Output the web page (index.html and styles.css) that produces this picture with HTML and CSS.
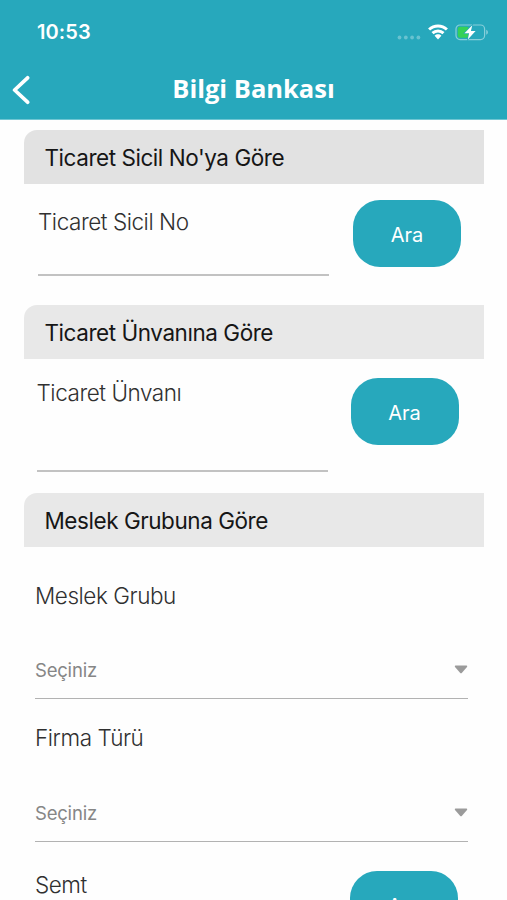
FILE: index.html
```html
<!DOCTYPE html>
<html lang="tr">
<head>
<meta charset="utf-8">
<meta name="viewport" content="width=device-width, initial-scale=1">
<title>Bilgi Bankası</title>
<link rel="stylesheet" href="styles.css">
</head>
<body>
<header class="top">
  <div class="status">
    <span class="time">10:53</span>
    <svg class="signal" width="24" height="5" viewBox="0 0 24 5"><g fill="#fff" fill-opacity=".3"><circle cx="2.5" cy="2.5" r="1.9"/><circle cx="8.8" cy="2.5" r="1.9"/><circle cx="15.1" cy="2.5" r="1.9"/><circle cx="21.4" cy="2.5" r="1.9"/></g></svg>
    <svg class="wifi" width="20" height="16" viewBox="0 0 20 16"><g fill="none" stroke="#fff" stroke-width="3"><path d="M1.1 5.5C6.1.7 13.9.7 18.9 5.5"/><path d="M4.5 9.2c3.1-2.9 7.900-2.900 11 0"/></g><path d="M6.6 11.7c1.900-1.800 4.900-1.800 6.800 0L10 15.4z" fill="#fff"/></svg>
    <svg class="battery" width="34" height="17" viewBox="0 0 34 17"><rect x="1" y="1" width="28.6" height="14.6" rx="4" fill="none" stroke="#fff" stroke-opacity=".45" stroke-width="1.2"/><path d="M31.3 5.8c2 .8 2 4.2 0 5z" fill="#fff" fill-opacity=".5"/><rect x="2.8" y="2.8" width="11" height="11" rx="2.2" fill="#35d158"/><path d="M17.3 1.2 9.5 9.2h4.600l-1.300 6.200 7.800-8.300h-4.700z" fill="#fff" stroke="#27a8bc" stroke-width="1.2" paint-order="stroke"/></svg>
  </div>
  <div class="nav">
    <svg class="back" width="20" height="30" viewBox="0 0 20 30"><path d="M17.6 2.800 4.600 15l13 12.200" fill="none" stroke="#fff" stroke-width="3.7" stroke-linecap="round" stroke-linejoin="round"/></svg>
    <h1 class="title">Bilgi Bankası</h1>
  </div>
</header>
<main class="content">
  <section class="group registry">
    <h2 class="heading dark">Ticaret Sicil No'ya Göre</h2>
    <div class="row">
      <label class="field"><span class="label">Ticaret Sicil No</span></label>
      <button class="search">Ara</button>
    </div>
  </section>
  <section class="group company">
    <h2 class="heading">Ticaret Ünvanına Göre</h2>
    <div class="row">
      <label class="field"><span class="label">Ticaret Ünvanı</span></label>
      <button class="search">Ara</button>
    </div>
  </section>
  <section class="group trade">
    <h2 class="heading">Meslek Grubuna Göre</h2>
    <div class="picker">
      <span class="label">Meslek Grubu</span>
      <div class="select"><span>Seçiniz</span><svg width="14" height="9" viewBox="0 0 14 9"><path d="M1.5.5h11q1.3.4.5 1.4L8 7.7q-1 1-2 0L1 1.9Q.2.9 1.5.5z" fill="#9b9b9b"/></svg></div>
    </div>
    <div class="picker second">
      <span class="label">Firma Türü</span>
      <div class="select"><span>Seçiniz</span><svg width="14" height="9" viewBox="0 0 14 9"><path d="M1.5.5h11q1.3.4.5 1.4L8 7.7q-1 1-2 0L1 1.9Q.2.9 1.5.5z" fill="#9b9b9b"/></svg></div>
    </div>
    <div class="row last">
      <span class="label">Semt</span>
      <button class="search">Ara</button>
    </div>
  </section>
</main>
</body>
</html>
```
FILE: styles.css
```css
* { box-sizing: border-box; }
html, body { height: 100%; }
body {
  margin: 0;
  height: 900px;
  overflow: hidden;
  background: #fefefe;
  color: #303030;
  font-family: Inter, "Liberation Sans", sans-serif;
}
svg { display: block; flex: none; }
.top { height: 120px; background: #27a8bc; color: #fff; border-bottom: 1px solid #6fc6d3; }
.status { display: flex; align-items: center; height: 64px; padding: 0 18px 0 37px; }
.time { flex: 1; font-size: 20px; font-weight: 600; letter-spacing: .1px; }
.signal { margin: 10px 7px 0 0; }
.wifi { margin-right: 7px; }
.nav { display: grid; grid-template-columns: 34px 1fr 34px; align-items: center; height: 52px; }
.back { margin-left: 10px; }
.title { margin: -4px 0 0; text-align: center; font: 700 25.5px/34px "Open Sans", sans-serif; }
.content { padding: 10px 23px 0 24px; }
.registry { height: 175px; }
.company { height: 188px; }
.heading {
  margin: 0;
  height: 54px;
  padding-left: 20.5px;
  border-top-left-radius: 13px;
  background: #e8e8e8;
  color: #161616;
  font-size: 22.5px;
  font-weight: 400;
  line-height: 55px;
  letter-spacing: -.45px;
}
.dark { background: #e2e2e2; }
.row { display: flex; align-items: flex-start; }
.label { display: block; font-size: 22.5px; font-weight: 300; line-height: 28px; letter-spacing: -.45px; }
.field { display: block; width: 291px; border-bottom: 2px solid #c2c2c2; }
.registry .field { height: 92px; margin: 0 24px 0 14px; padding-top: 24px; }
.company .field { height: 113px; margin: 0 23px 0 12.5px; padding-top: 20px; }
.search {
  flex: none;
  width: 108px;
  height: 67px;
  margin: 16px 0 0;
  padding: 2px 0 0;
  border: 0;
  border-radius: 27px;
  background: #27a8bc;
  color: #fff;
  font: 400 20px/24px Inter, sans-serif;
}
.company .search { margin-top: 19px; }
.picker { width: 433px; margin-left: 11px; padding-top: 35px; }
.second { padding-top: 25px; }
.select {
  display: flex;
  align-items: center;
  justify-content: space-between;
  height: 60px;
  margin-top: 29px;
  padding-top: 2px;
  border-bottom: 1.5px solid #b2b2b2;
  color: #868686;
  font-size: 18.5px;
  line-height: 24px;
  letter-spacing: -.2px;
}
.second .select { margin-top: 30px; }
.last { justify-content: space-between; margin: 0 26px 0 11px; padding-top: 29px; }
.last .search { margin-top: 0; }
```
